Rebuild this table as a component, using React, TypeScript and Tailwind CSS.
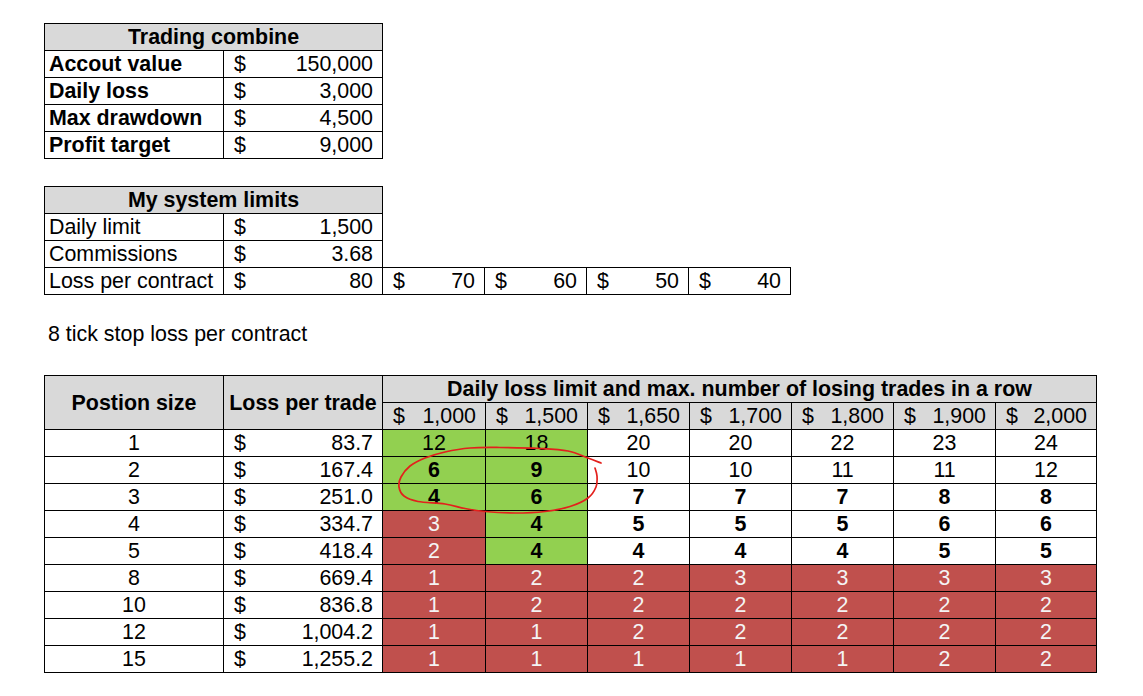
import React from "react";

const limits = ["1,000", "1,500", "1,650", "1,700", "1,800", "1,900", "2,000"];

type Row = { size: string; loss: string; vals: number[] };
const rows: Row[] = [
  { size: "1", loss: "83.7", vals: [12, 18, 20, 20, 22, 23, 24] },
  { size: "2", loss: "167.4", vals: [6, 9, 10, 10, 11, 11, 12] },
  { size: "3", loss: "251.0", vals: [4, 6, 7, 7, 7, 8, 8] },
  { size: "4", loss: "334.7", vals: [3, 4, 5, 5, 5, 6, 6] },
  { size: "5", loss: "418.4", vals: [2, 4, 4, 4, 4, 5, 5] },
  { size: "8", loss: "669.4", vals: [1, 2, 2, 3, 3, 3, 3] },
  { size: "10", loss: "836.8", vals: [1, 2, 2, 2, 2, 2, 2] },
  { size: "12", loss: "1,004.2", vals: [1, 1, 2, 2, 2, 2, 2] },
  { size: "15", loss: "1,255.2", vals: [1, 1, 1, 1, 1, 2, 2] },
];

function cellStyle(ri: number, ci: number): { fill: "g" | "r" | "w"; bold: boolean } {
  let fill: "g" | "r" | "w" = "w";
  if (ci === 0) fill = ri <= 2 ? "g" : "r";
  else if (ci === 1) fill = ri <= 4 ? "g" : "r";
  else fill = ri <= 4 ? "w" : "r";
  let bold = false;
  if (fill !== "r") {
    if (ri === 1) bold = ci <= 1;
    else if (ri >= 2) bold = true;
  }
  return { fill, bold };
}

const fillClass = {
  g: "bg-[#92d050] text-black",
  r: "bg-[#c0504d] text-[#f4f4f4]",
  w: "bg-white text-black",
};

function Money({ v }: { v: string }) {
  return (
    <div className="flex justify-between pl-[10px] pr-[9px]">
      <span>$</span>
      <span>{v}</span>
    </div>
  );
}

const td = "border border-black h-[27px] p-0 leading-[26px]";
const gray = "bg-[#d9d9d9]";

function Circle() {
  const pts: [number, number][] = [
    [601, 463], [588, 458], [568, 451], [540, 448.5], [500, 447.5], [470, 448], [445, 452],
    [425, 458], [410, 466], [401, 477], [399, 487], [404, 496], [418, 501.5], [445, 504],
    [465, 508.5], [485, 511.5], [515, 513], [545, 511.5], [570, 506.5], [588, 498],
    [596, 487], [597, 476], [595, 468],
  ];
  let d = `M ${pts[0][0]} ${pts[0][1]}`;
  for (let i = 0; i < pts.length - 1; i++) {
    const p0 = pts[i - 1] || pts[i];
    const p1 = pts[i];
    const p2 = pts[i + 1];
    const p3 = pts[i + 2] || p2;
    const c1x = p1[0] + (p2[0] - p0[0]) / 6;
    const c1y = p1[1] + (p2[1] - p0[1]) / 6;
    const c2x = p2[0] - (p3[0] - p1[0]) / 6;
    const c2y = p2[1] - (p3[1] - p1[1]) / 6;
    d += ` C ${c1x} ${c1y} ${c2x} ${c2y} ${p2[0]} ${p2[1]}`;
  }
  return (
    <svg
      className="absolute left-0 top-0 w-[1143px] h-[696px] pointer-events-none"
      viewBox="0 0 1143 696"
    >
      <path d={d} fill="none" stroke="#e3201c" strokeWidth={1.7} strokeLinecap="round" />
    </svg>
  );
}

export default function App() {
  return (
    <div className="relative w-[1143px] h-[696px] bg-white text-black text-[21.4px] font-['Liberation_Sans',Arial,sans-serif] pl-[44px] pt-[23px]">
      {/* Trading combine */}
      <table className="border-collapse table-fixed w-[338px]">
        <colgroup>
          <col className="w-[179px]" />
          <col className="w-[159px]" />
        </colgroup>
        <tbody>
          <tr>
            <td colSpan={2} className={`${td} ${gray} text-center font-bold`}>Trading combine</td>
          </tr>
          {[
            ["Accout value", "150,000"],
            ["Daily loss", "3,000"],
            ["Max drawdown", "4,500"],
            ["Profit target", "9,000"],
          ].map(([l, v]) => (
            <tr key={l}>
              <td className={`${td} font-bold pl-[4px]`}>{l}</td>
              <td className={td}><Money v={v} /></td>
            </tr>
          ))}
        </tbody>
      </table>

      {/* My system limits */}
      <table className="border-collapse table-fixed w-[746px] mt-[27px]">
        <colgroup>
          <col className="w-[179px]" />
          <col className="w-[159px]" />
          <col className="w-[102px]" />
          <col className="w-[102px]" />
          <col className="w-[102px]" />
          <col className="w-[102px]" />
        </colgroup>
        <tbody>
          <tr>
            <td colSpan={2} className={`${td} ${gray} text-center font-bold`}>My system limits</td>
            <td colSpan={4} className="p-0" />
          </tr>
          <tr>
            <td className={`${td} pl-[4px]`}>Daily limit</td>
            <td className={td}><Money v="1,500" /></td>
            <td colSpan={4} className="p-0" />
          </tr>
          <tr>
            <td className={`${td} pl-[4px]`}>Commissions</td>
            <td className={td}><Money v="3.68" /></td>
            <td colSpan={4} className="p-0" />
          </tr>
          <tr>
            <td className={`${td} pl-[4px]`}>Loss per contract</td>
            <td className={td}><Money v="80" /></td>
            {["70", "60", "50", "40"].map((v) => (
              <td key={v} className={td}><Money v={v} /></td>
            ))}
          </tr>
        </tbody>
      </table>

      <div className="mt-[26px] pl-[4px] h-[27px] leading-[27px]">8 tick stop loss per contract</div>

      {/* Main table */}
      <table className="border-collapse table-fixed w-[1052px] mt-[27px]">
        <colgroup>
          <col className="w-[179px]" />
          <col className="w-[159px]" />
          <col className="w-[103px]" />
          <col className="w-[102px]" />
          <col className="w-[102px]" />
          <col className="w-[102px]" />
          <col className="w-[102px]" />
          <col className="w-[102px]" />
          <col className="w-[101px]" />
        </colgroup>
        <tbody>
          <tr>
            <td rowSpan={2} className={`${td} ${gray} text-center font-bold`}>Postion size</td>
            <td rowSpan={2} className={`${td} ${gray} text-center font-bold`}>Loss per trade</td>
            <td colSpan={7} className={`${td} ${gray} text-center font-bold`}>
              Daily loss limit and max. number of losing trades in a row
            </td>
          </tr>
          <tr>
            {limits.map((l) => (
              <td key={l} className={`${td} ${gray}`}><Money v={l} /></td>
            ))}
          </tr>
          {rows.map((r, ri) => (
            <tr key={r.size}>
              <td className={`${td} text-center`}>{r.size}</td>
              <td className={td}><Money v={r.loss} /></td>
              {r.vals.map((v, ci) => {
                const s = cellStyle(ri, ci);
                return (
                  <td
                    key={ci}
                    className={`${td} text-center ${fillClass[s.fill]} ${s.bold ? "font-bold" : ""}`}
                  >
                    {v}
                  </td>
                );
              })}
            </tr>
          ))}
        </tbody>
      </table>

      <Circle />
    </div>
  );
}
